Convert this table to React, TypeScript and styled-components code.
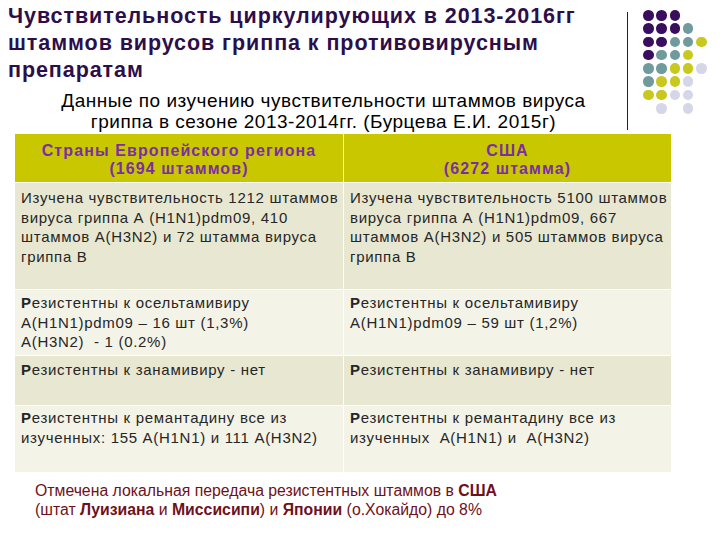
import React from "react";
import styled, { createGlobalStyle } from "styled-components";

const Global = createGlobalStyle`
  html, body { margin: 0; padding: 0; background: #ffffff; }
  body { font-family: "Liberation Sans", Arial, sans-serif; }
`;

const Page = styled.div`
  width: 720px;
  height: 540px;
  overflow: hidden;
  background: #ffffff;
  display: flex;
  flex-direction: column;
`;

const Top = styled.div`
  display: flex;
  align-items: flex-start;
`;

const Heading = styled.div`
  width: 627px;
  flex: none;
`;

const Title = styled.h1`
  margin: 3px 0 0 8px;
  font-family: "Liberation Sans", Arial, sans-serif;
  font-weight: bold;
  font-size: 21.5px;
  line-height: 27px;
  letter-spacing: 0.93px;
  white-space: nowrap;
  color: #2c0f4a;
`;

const Subtitle = styled.p`
  margin: 6px 0 0 0;
  padding-left: 20px;
  font-size: 19px;
  line-height: 21px;
  letter-spacing: 0.5px;
  text-align: center;
  white-space: nowrap;
  color: #000000;
`;

const Divider = styled.div`
  width: 1px;
  height: 118px;
  margin-top: 12px;
  background: #222222;
  flex: none;
`;

const DotGrid = styled.div`
  margin: 10px 0 0 15px;
  display: grid;
  grid-template-columns: repeat(5, 10.5px);
  grid-auto-rows: 10.5px;
  column-gap: 2.8px;
  row-gap: 2.8px;
`;

const Dot = styled.span<{ $c: string }>`
  width: 10.5px;
  height: 10.5px;
  border-radius: 50%;
  background: ${(p) => p.$c};
`;

const Table = styled.div`
  margin: 2px 0 0 15px;
  width: 656px;
  display: grid;
  grid-template-columns: 328px 327px;
  column-gap: 1px;
  row-gap: 1px;
  background: #ffffff;
`;

const HeadCell = styled.div`
  background: #c8c700;
  height: 48px;
  padding-top: 3px;
  box-sizing: border-box;
  display: flex;
  flex-direction: column;
  justify-content: center;
  align-items: center;
  color: #7b2ea4;
  font-weight: bold;
  font-size: 16px;
  line-height: 18px;
  letter-spacing: 1.1px;
  text-align: center;
  white-space: nowrap;
`;

const Cell = styled.div<{ $shade: boolean; $h: number; $pad: number }>`
  background: ${(p) => (p.$shade ? "#e8e8d2" : "#f3f3e7")};
  height: ${(p) => p.$h}px;
  box-sizing: border-box;
  padding: ${(p) => p.$pad}px 6px 0 6px;
  font-size: 15px;
  line-height: 19.5px;
  letter-spacing: 0.7px;
  white-space: nowrap;
  color: #262626;
`;

const B = styled.b`
  font-weight: bold;
`;

const Note = styled.p`
  margin: 9px 0 0 35px;
  font-family: "Liberation Sans Narrow", "Liberation Sans", Arial, sans-serif;
  font-size: 15.8px;
  line-height: 19px;
  color: #6e1020;
  white-space: nowrap;
`;

const P = "#3a0d5e";
const T = "#6f9b9c";
const Y = "#c8c81e";
const L = "#d5d6e8";
const dotRows: (string | null)[][] = [
  [P, P, P, null, null],
  [P, P, P, T, null],
  [P, P, T, T, Y],
  [P, T, T, Y, null],
  [T, T, Y, Y, L],
  [T, Y, Y, L, null],
  [Y, Y, L, L, null],
  [null, L, null, L, null],
];

type Row = { h: number; pad: number; shade: boolean; left: React.ReactNode; right: React.ReactNode };

const rows: Row[] = [
  {
    h: 106,
    pad: 5,
    shade: true,
    left: (
      <>
        Изучена чувствительность 1212 штаммов
        <br />
        вируса гриппа А (Н1N1)pdm09, 410
        <br />
        штаммов А(Н3N2) и 72 штамма вируса
        <br />
        гриппа В
      </>
    ),
    right: (
      <>
        Изучена чувствительность 5100 штаммов
        <br />
        вируса гриппа А (Н1N1)pdm09, 667
        <br />
        штаммов А(Н3N2) и 505 штаммов вируса
        <br />
        гриппа В
      </>
    ),
  },
  {
    h: 65,
    pad: 3,
    shade: false,
    left: (
      <>
        <B>Р</B>езистентны к осельтамивиру
        <br />
        А(Н1N1)pdm09 – 16 шт (1,3%)
        <br />
        А(Н3N2) &nbsp;- 1 (0.2%)
      </>
    ),
    right: (
      <>
        <B>Р</B>езистентны к осельтамивиру
        <br />
        А(Н1N1)pdm09 – 59 шт (1,2%)
      </>
    ),
  },
  {
    h: 49,
    pad: 4,
    shade: true,
    left: (
      <>
        <B>Р</B>езистентны к занамивиру - нет
      </>
    ),
    right: (
      <>
        <B>Р</B>езистентны к занамивиру - нет
      </>
    ),
  },
  {
    h: 66,
    pad: 2,
    shade: false,
    left: (
      <>
        <B>Р</B>езистентны к ремантадину все из
        <br />
        изученных: 155 А(Н1N1) и 111 А(Н3N2)
      </>
    ),
    right: (
      <>
        <B>Р</B>езистентны к ремантадину все из
        <br />
        изученных &nbsp;А(Н1N1) и &nbsp;А(Н3N2)
      </>
    ),
  },
];

export default function App() {
  return (
    <Page>
      <Global />
      <Top>
        <Heading>
          <Title>
            Чувствительность циркулирующих в 2013-2016гг
            <br />
            штаммов вирусов гриппа к противовирусным
            <br />
            препаратам
          </Title>
          <Subtitle>
            Данные по изучению чувствительности штаммов вируса
            <br />
            гриппа в сезоне 2013-2014гг. (Бурцева Е.И. 2015г)
          </Subtitle>
        </Heading>
        <Divider />
        <DotGrid>
          {dotRows.flatMap((r, i) =>
            r.map((c, j) => <Dot key={`${i}-${j}`} $c={c ?? "transparent"} />)
          )}
        </DotGrid>
      </Top>
      <Table>
        <HeadCell>
          <span>Страны Европейского региона</span>
          <span>(1694 штаммов)</span>
        </HeadCell>
        <HeadCell>
          <span>США</span>
          <span>(6272 штамма)</span>
        </HeadCell>
        {rows.map((r, i) => (
          <React.Fragment key={i}>
            <Cell $shade={r.shade} $h={r.h} $pad={r.pad}>{r.left}</Cell>
            <Cell $shade={r.shade} $h={r.h} $pad={r.pad}>{r.right}</Cell>
          </React.Fragment>
        ))}
      </Table>
      <Note>
        Отмечена локальная передача резистентных штаммов в <B>США</B>
        <br />
        (штат <B>Луизиана</B> и <B>Миссисипи</B>) и <B>Японии</B> (о.Хокайдо) до 8%
      </Note>
    </Page>
  );
}
